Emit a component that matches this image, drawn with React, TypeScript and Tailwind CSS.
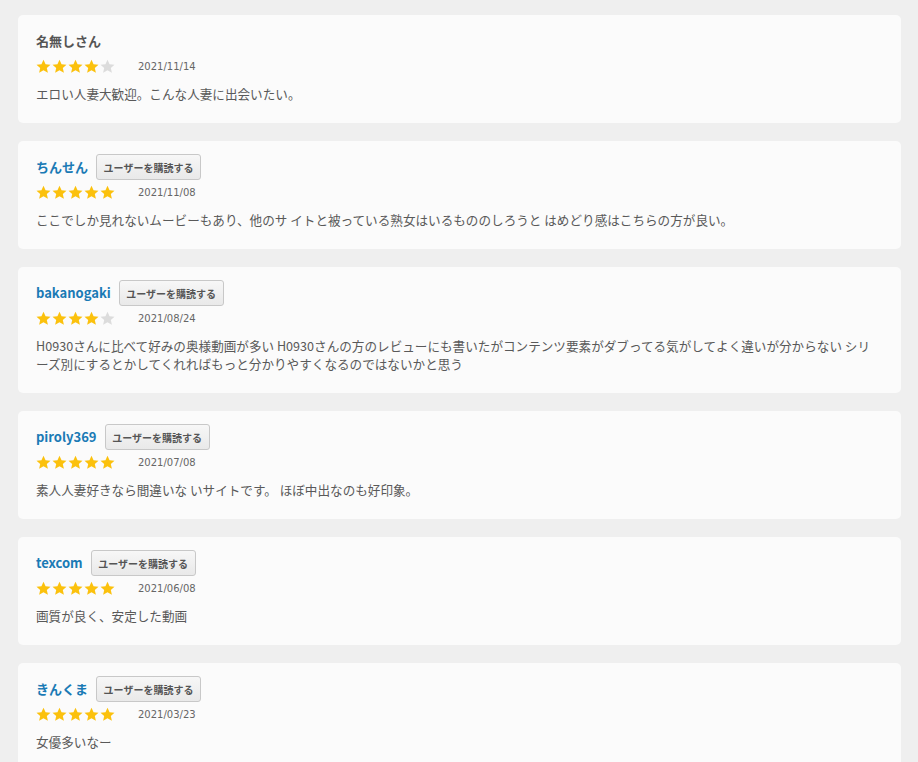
import React from "react";

type Review = {
  name: string;
  subscribable: boolean;
  rating: number;
  date: string;
  body: string;
};

const reviews: Review[] = [
  {
    name: "名無しさん",
    subscribable: false,
    rating: 4,
    date: "2021/11/14",
    body: "エロい人妻大歓迎。こんな人妻に出会いたい。",
  },
  {
    name: "ちんせん",
    subscribable: true,
    rating: 5,
    date: "2021/11/08",
    body: "ここでしか見れないムービーもあり、他のサ イトと被っている熟女はいるもののしろうと はめどり感はこちらの方が良い。",
  },
  {
    name: "bakanogaki",
    subscribable: true,
    rating: 4,
    date: "2021/08/24",
    body: "H0930さんに比べて好みの奥様動画が多い H0930さんの方のレビューにも書いたがコンテンツ要素がダブってる気がしてよく違いが分からない シリーズ別にするとかしてくれればもっと分かりやすくなるのではないかと思う",
  },
  {
    name: "piroly369",
    subscribable: true,
    rating: 5,
    date: "2021/07/08",
    body: "素人人妻好きなら間違いな いサイトです。 ほぼ中出なのも好印象。",
  },
  {
    name: "texcom",
    subscribable: true,
    rating: 5,
    date: "2021/06/08",
    body: "画質が良く、安定した動画",
  },
  {
    name: "きんくま",
    subscribable: true,
    rating: 5,
    date: "2021/03/23",
    body: "女優多いなー",
  },
];

function Star({ filled }: { filled: boolean }) {
  return (
    <svg width="15" height="15" viewBox="0 0 24 24" aria-hidden="true">
      <path
        d="M12 1l3.3 7.2 7.9.8-5.9 5.3 1.7 7.8L12 18.1l-7 4 1.7-7.8L.8 9l7.9-.8z"
        fill={filled ? "#fbc10d" : "#dcdcdc"}
      />
    </svg>
  );
}

function ReviewCard({ review }: { review: Review }) {
  return (
    <div className="rounded-[5px] bg-[#fbfbfb] pl-[18px] pr-[26px] pt-[13px] pb-[20px]">
      <div className="flex h-[26px] items-center gap-[8px]">
        <span
          className={
            review.subscribable
              ? "text-[13px] font-bold text-[#1a7ab5]"
              : "text-[13px] font-bold text-[#555555]"
          }
        >
          {review.name}
        </span>
        {review.subscribable && (
          <button className="h-[26px] w-[105px] rounded-[3px] border border-[#c8c8c8] bg-gradient-to-b from-[#f7f7f7] to-[#e9e9e9] text-[10px] font-bold text-[#555555]">
            ユーザーを購読する
          </button>
        )}
      </div>
      <div className="mt-[4px] flex h-[16px] items-center">
        <div className="flex gap-[1px]">
          {[0, 1, 2, 3, 4].map((i) => (
            <Star key={i} filled={i < review.rating} />
          ))}
        </div>
        <span className="ml-[23px] font-['DejaVu_Sans',sans-serif] text-[10px] text-[#666666]">
          {review.date}
        </span>
      </div>
      <p className="mt-[11px] text-[12.6px] leading-[18px] text-[#595959]">{review.body}</p>
    </div>
  );
}

export default function App() {
  return (
    <div
      className="min-h-[762px] bg-[#efefef] pt-[15px] pl-[18px] pr-[17px]"
      style={{ fontFamily: '"Noto Sans CJK JP", "Noto Sans", sans-serif' }}
    >
      <div className="flex flex-col gap-[18px]">
        {reviews.map((r) => (
          <ReviewCard key={r.date + r.name} review={r} />
        ))}
      </div>
    </div>
  );
}
